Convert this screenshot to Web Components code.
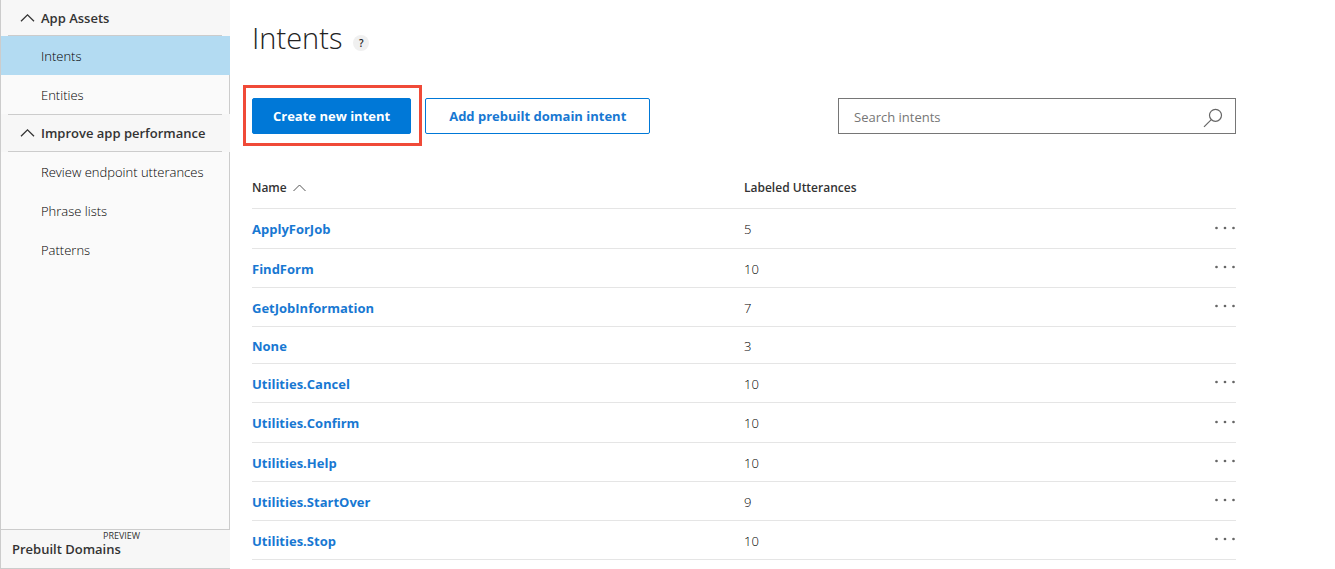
<!DOCTYPE html>
<html lang="en">
<head>
<meta charset="utf-8">
<title>Intents</title>
<style>
  html, body { height: 100%; }
  body {
    margin: 0;
    background: #fff;
    color: #222;
    font-family: "Open Sans", "Noto Sans", sans-serif;
    font-size: 13px;
    line-height: 20px;
  }
</style>
</head>
<body>
<intents-app></intents-app>

<script>
  const define = (name, html, setup) => {
    const template = document.createElement('template');
    template.innerHTML = html;
    customElements.define(name, class extends HTMLElement {
      constructor() {
        super();
        this.attachShadow({ mode: 'open' }).append(template.content.cloneNode(true));
      }
      connectedCallback() {
        if (setup) setup(this, this.shadowRoot);
      }
    });
  };

  define('nav-item', `
    <style>
      :host { display: block; margin-right: -1px; border-right: 1px solid #ccc; }
      :host([current]) { background: #b3dbf2; border-right-color: #b3dbf2; }
      a { display: flex; align-items: center; height: 39px; padding: 0 0 0 40px; box-sizing: border-box; color: #000; font-weight: 300; text-decoration: none; }
    </style>
    <a href="#"><slot></slot></a>`,
    (host, root) => {
      if (host.hasAttribute('current')) root.querySelector('a').setAttribute('aria-current', 'page');
    });

  define('nav-section', `
    <style>
      :host { display: block; }
      .head { background: #f7f7f7; margin-right: -1px; padding: 0 8px 0 7px; }
      button {
        display: flex; align-items: center; gap: 6px; width: 100%; height: 36px; padding: 0 0 0 12px;
        border: 0; border-bottom: 1px solid #ccc; background: none;
        color: #333; font: inherit; font-weight: 600; text-align: left; white-space: nowrap;
      }
      :host([divided]) button { height: 38px; border-top: 1px solid #ccc; }
      svg { display: block; flex: none; }
    </style>
    <div class="head">
      <button type="button" aria-expanded="true">
        <svg width="15" height="10" viewBox="0 0 15 10" fill="none" stroke="#333" stroke-width="1.3" aria-hidden="true"><path d="M1 8.3 7.5 1.8 14 8.3"/></svg>
        <slot name="title"></slot>
      </button>
    </div>
    <slot></slot>`);

  define('side-nav', `
    <style>
      :host { display: flex; flex-direction: column; box-sizing: border-box; background: #fafafa; border: 1px solid #ccc; border-top: 0; }
      nav { flex: 1; }
      footer { margin-right: -1px; border-top: 1px solid #ccc; background: #f7f7f7; height: 38px; }
      footer a { position: relative; display: inline-block; padding: 9px 0 0 11px; color: #333; font-weight: 600; text-decoration: none; }
      small { position: absolute; top: 1px; left: 102px; font-size: 9px; line-height: 10px; font-weight: 400; color: #333; }
    </style>
    <nav aria-label="App">
      <nav-section>
        <span slot="title">App Assets</span>
        <nav-item current>Intents</nav-item>
        <nav-item>Entities</nav-item>
      </nav-section>
      <nav-section divided>
        <span slot="title">Improve app performance</span>
        <nav-item>Review endpoint utterances</nav-item>
        <nav-item>Phrase lists</nav-item>
        <nav-item>Patterns</nav-item>
      </nav-section>
    </nav>
    <footer><a href="#">Prebuilt Domains<small>PREVIEW</small></a></footer>`);

  define('page-title', `
    <style>
      :host { display: flex; align-items: center; gap: 11px; }
      h1 { margin: 0; font-size: 29px; line-height: 40px; font-weight: 300; color: #222; }
      button { margin-top: 10px; width: 16px; height: 16px; padding: 0; border: 0; border-radius: 50%; background: #f0f0f0; color: #222; font: inherit; font-size: 10px; line-height: 16px; font-weight: 600; }
    </style>
    <h1><slot></slot></h1><button type="button" aria-label="Help">?</button>`);

  define('action-button', `
    <style>
      :host { display: block; }
      button { display: block; height: 36px; padding: 0 23px; border: 1px solid #0078d7; border-radius: 2px; background: #fff; color: #1878d2; font: inherit; font-weight: 700; white-space: nowrap; }
      :host([primary]) button { padding: 0 20px; background: #0078d7; color: #fff; }
    </style>
    <button type="button"><slot></slot></button>`);

  define('search-box', `
    <style>
      :host { display: block; }
      label { display: flex; align-items: center; height: 36px; box-sizing: border-box; padding: 0 12px 0 15px; border: 1px solid #767676; background: #fff; }
      input { flex: 1; min-width: 0; border: 0; padding: 2px 0 0; outline: 0; background: none; font: inherit; color: #222; }
      input::placeholder { color: #767676; opacity: 1; }
      svg { display: block; flex: none; margin-top: 4px; }
    </style>
    <label>
      <input type="text" placeholder="Search intents" aria-label="Search intents">
      <svg width="20" height="20" viewBox="0 0 20 20" fill="none" stroke="#666" stroke-width="1.2" aria-hidden="true"><circle cx="12.5" cy="7.3" r="6"/><path d="M8.3 11.6 1 18.9"/></svg>
    </label>`);

  define('intent-table', `
    <style>
      :host { display: block; }
      table { width: 100%; border-collapse: separate; border-spacing: 0; table-layout: fixed; }
      th, td { padding: 0; border-bottom: 1px solid #e5e5e5; text-align: left; box-sizing: border-box; }
      th { height: 41px; font-size: 12px; font-weight: 600; color: #333; }
      th button { display: flex; align-items: center; gap: 6px; padding: 0; border: 0; background: none; color: inherit; font: inherit; }
      .name, .count { width: 50%; }
      tbody tr { height: 39px; }
      tbody tr:nth-child(5n + 1) { height: 40px; }
      tbody tr.locked { height: 37px; }
      td { color: #000; font-weight: 300; padding-top: 1px; }
      td a { color: #1878d2; font-weight: 700; text-decoration: none; }
      .last { display: flex; align-items: center; justify-content: space-between; }
      .more { display: block; padding: 0 0 3px; border: 0; background: none; line-height: 0; }
      svg { display: block; }
    </style>
    <table>
      <thead>
        <tr>
          <th class="name" aria-sort="ascending"><button type="button">Name
            <svg width="13" height="8" viewBox="0 0 13 8" fill="none" stroke="#555" aria-hidden="true"><path d="M.5 7 6.5 1 12.5 7"/></svg></button></th>
          <th class="count">Labeled Utterances</th>
        </tr>
      </thead>
      <tbody></tbody>
    </table>`,
    (host, root) => {
      const rows = [
        ['ApplyForJob', 5], ['FindForm', 10], ['GetJobInformation', 7], ['None', 3],
        ['Utilities.Cancel', 10], ['Utilities.Confirm', 10], ['Utilities.Help', 10],
        ['Utilities.StartOver', 9], ['Utilities.Stop', 10]
      ];
      root.querySelector('tbody').innerHTML = rows.map(([name, count]) => {
        const locked = name === 'None';
        const more = locked ? '' : `<button class="more" type="button" aria-label="More options for ${name}">
          <svg width="22" height="4" viewBox="0 0 22 4" fill="#666" aria-hidden="true"><circle cx="2.5" cy="2" r="1.35"/><circle cx="11" cy="2" r="1.35"/><circle cx="19.5" cy="2" r="1.35"/></svg></button>`;
        return `<tr${locked ? ' class="locked"' : ''}><td><a href="#">${name}</a></td>
          <td><div class="last"><span>${count}</span>${more}</div></td></tr>`;
      }).join('');
    });

  define('intents-app', `
    <style>
      :host { display: grid; grid-template-columns: 230px 1fr; min-height: 100vh; }
      main { padding: 18px 99px 9px 22px; min-width: 0; }
      .toolbar { display: flex; align-items: center; margin: 27px 0 22px -9px; }
      .callout { border: 3px solid #f04a38; padding: 10px 8px 9px 6px; margin-right: 3px; }
      search-box { flex: 0 1 398px; margin-left: auto; }
    </style>
    <side-nav></side-nav>
    <main>
      <page-title>Intents</page-title>
      <div class="toolbar">
        <div class="callout"><action-button primary>Create new intent</action-button></div>
        <action-button>Add prebuilt domain intent</action-button>
        <search-box></search-box>
      </div>
      <intent-table></intent-table>
    </main>`);
</script>
</body>
</html>
